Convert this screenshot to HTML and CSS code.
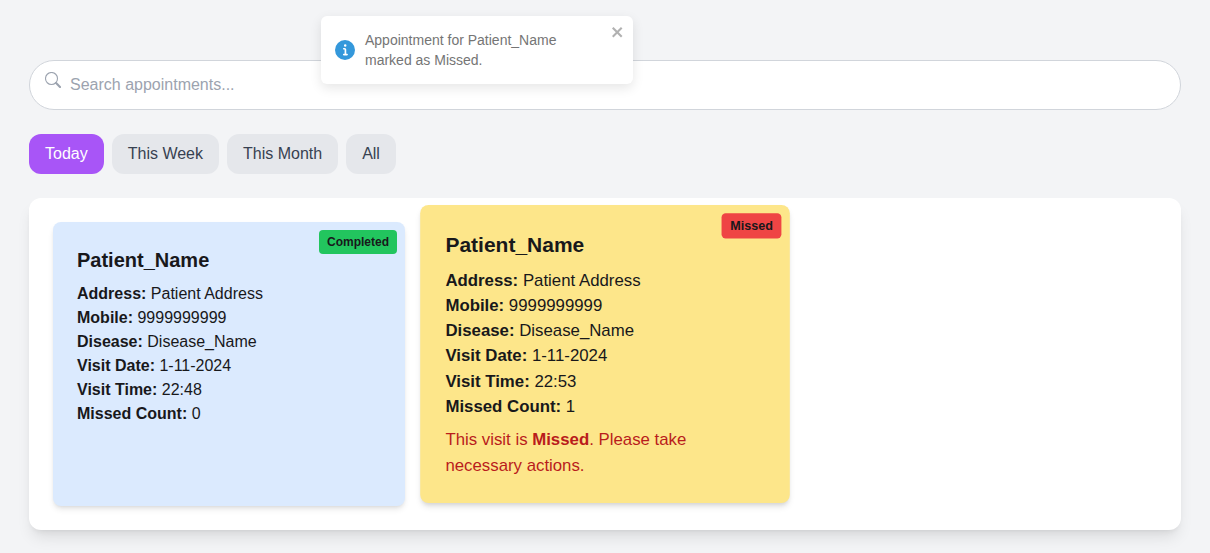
FILE: index.html
```html
<!DOCTYPE html>
<html lang="en">
<head>
<meta charset="utf-8">
<title>Appointments</title>
<link rel="stylesheet" href="styles.css">
</head>
<body>
<main class="page">
  <div class="search">
    <svg class="search-icon" viewBox="0 0 16 16" width="16" height="16"><circle cx="6.5" cy="6.5" r="6"/><path d="M11.1 11.1L15 15"/></svg>
    <input class="search-input" type="text" placeholder="Search appointments...">
  </div>
  <div class="filters">
    <button class="filter active">Today</button>
    <button class="filter">This Week</button>
    <button class="filter">This Month</button>
    <button class="filter">All</button>
  </div>
  <section class="panel">
    <article class="card completed">
      <span class="badge badge-green">Completed</span>
      <h3 class="name">Patient_Name</h3>
      <p><strong>Address:</strong> Patient Address</p>
      <p><strong>Mobile:</strong> 9999999999</p>
      <p><strong>Disease:</strong> Disease_Name</p>
      <p><strong>Visit Date:</strong> 1-11-2024</p>
      <p><strong>Visit Time:</strong> 22:48</p>
      <p><strong>Missed Count:</strong> 0</p>
    </article>
    <article class="card missed">
      <span class="badge badge-red">Missed</span>
      <h3 class="name">Patient_Name</h3>
      <p><strong>Address:</strong> Patient Address</p>
      <p><strong>Mobile:</strong> 9999999999</p>
      <p><strong>Disease:</strong> Disease_Name</p>
      <p><strong>Visit Date:</strong> 1-11-2024</p>
      <p><strong>Visit Time:</strong> 22:53</p>
      <p><strong>Missed Count:</strong> 1</p>
      <p class="warning">This visit is <strong>Missed</strong>. Please take necessary actions.</p>
    </article>
  </section>
</main>
<div class="toast">
  <svg class="toast-icon" viewBox="0 0 24 24" width="20" height="20" fill="#3498db"><path d="M12 0a12 12 0 1012 12A12.013 12.013 0 0012 0zm.25 5a1.5 1.5 0 11-1.5 1.5 1.5 1.5 0 011.5-1.5zm2.25 13.5h-4a1 1 0 010-2h.75a.25.25 0 00.25-.25v-4.5a.25.25 0 00-.25-.25h-.75a1 1 0 010-2h1a2 2 0 012 2v4.75a.25.25 0 00.25.25h.75a1 1 0 110 2z"/></svg>
  <div class="toast-text">Appointment for Patient_Name marked as Missed.</div>
  <svg class="toast-close" viewBox="0 0 14 16" width="14" height="16"><path fill-rule="evenodd" d="M7.71 8.23l3.75 3.75-1.48 1.48-3.75-3.75-3.75 3.75L1 11.98l3.75-3.75L1 4.48 2.48 3l3.75 3.75L9.98 3l1.48 1.48-3.75 3.75z"/></svg>
</div>
</body>
</html>
```

FILE: styles.css
```css
* { box-sizing: border-box; }
body {
  margin: 0;
  min-height: 553px;
  overflow: hidden;
  background: #f3f4f6;
  color: #18181b;
  font: 16px/24px "Liberation Sans", Arial, sans-serif;
}
.page { padding: 60px 29px 0; height: 553px; }
.search { position: relative; margin-bottom: 24px; }
.search-icon { position: absolute; left: 16px; top: 12px; fill: none; stroke: #9ca3af; stroke-width: 1.1; }
.search-icon path { stroke-width: 2.1; stroke-linecap: round; }
.search-input {
  display: block;
  width: 100%;
  height: 50px;
  padding: 12px 12px 12px 40px;
  border: 1px solid #d1d5db;
  border-radius: 25px;
  background: #fff;
  font: inherit;
}
.search-input::placeholder { color: #9ca3af; opacity: 1; }
.filters { display: flex; gap: 8px; margin-bottom: 24px; }
.filter {
  padding: 8px 16px;
  border: 0;
  border-radius: 12px;
  background: #e5e7eb;
  color: #374151;
  font: inherit;
}
.filter.active { background: #a855f7; color: #fff; }
.panel {
  display: grid;
  grid-template-columns: repeat(3, 1fr);
  gap: 24px;
  padding: 24px;
  border-radius: 12px;
  background: #fff;
  box-shadow: 0 10px 15px -3px rgba(0,0,0,.1), 0 4px 6px -4px rgba(0,0,0,.1);
}
.card {
  position: relative;
  padding: 24px;
  border-radius: 8px;
  box-shadow: 0 4px 6px -1px rgba(0,0,0,.1), 0 2px 4px -2px rgba(0,0,0,.1);
}
.completed { background: #dbeafe; }
.missed { background: #fde68a; transform: translateY(-10px) scale(1.05); }
.name { margin: 0 0 8px; font-size: 20px; line-height: 28px; font-weight: 700; }
.card p { margin: 0; }
.card .warning { margin-top: 8px; color: #b91c1c; }
.badge {
  position: absolute;
  top: 8px;
  right: 8px;
  padding: 4px 8px;
  border-radius: 4px;
  font-size: 12px;
  line-height: 16px;
  font-weight: 700;
}
.badge-green { background: #22c55e; }
.badge-red { background: #ef4444; }
.toast {
  position: absolute;
  top: 16px;
  left: 321px;
  display: flex;
  align-items: center;
  gap: 10px;
  width: 312px;
  height: 68px;
  padding: 14px;
  border-radius: 6px;
  background: #fff;
  color: #757575;
  font-size: 14px;
  line-height: 20px;
  box-shadow: 0 4px 12px rgba(0,0,0,.1);
}
.toast-icon { flex: none; }
.toast-text { flex: 1; padding-right: 30px; }
.toast-close { position: absolute; top: 8px; right: 8px; opacity: .3; }
```
